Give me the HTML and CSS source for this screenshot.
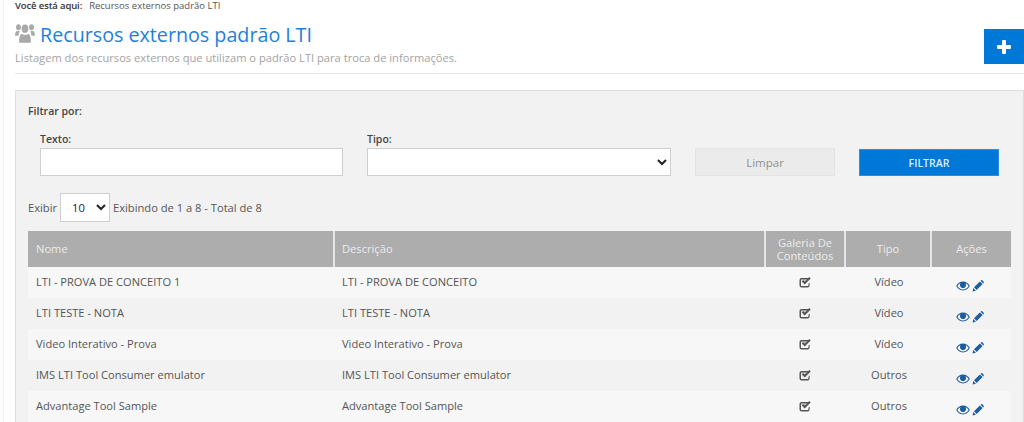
FILE: index.html
```html
<!DOCTYPE html>
<html lang="pt-BR">
<head>
<meta charset="utf-8">
<title>Recursos externos padrão LTI</title>
<link rel="stylesheet" href="styles.css">
</head>
<body>
<svg class="defs" width="0" height="0">
  <symbol id="i-check" viewBox="0 0 12 12">
    <path d="M2.500 2h6.300c.4 0 .8.100 1.100.3L8.700 3.500H2.600a.6.6 0 0 0-.6.600v5.300c0 .3.300.6.600.6h6.200c.3 0 .6-.3.600-.6V7.700l1.200-1.200v2.900a2 2 0 0 1-2 2H2.500a2 2 0 0 1-2-2V4a2 2 0 0 1 2-2z" fill="#555"/>
    <path d="M2.800 5.400l1.400-1.400 1.500 1.500L10.200 1l1.500 1.500-6 6z" fill="#555"/>
    <rect x="2.600" y="3.700" width="6" height="1" fill="#8a8a8a" opacity=".5"/>
  </symbol>
  <symbol id="i-eye" viewBox="0 0 14 10">
    <path d="M7 .6C4 .6 1.600 2.400.2 5c1.400 2.600 3.800 4.400 6.800 4.400s5.400-1.800 6.800-4.400C12.400 2.400 10 .6 7 .6zM7 8.500C4.700 8.500 2.700 7.100 1.400 5 2.200 3.700 3.200 2.700 4.500 2.100a3 3 0 1 0 5 0c1.300.6 2.300 1.600 3.100 2.900-1.300 2.100-3.300 3.500-5.600 3.500z" fill="#1d5c9e"/>
    <circle cx="7" cy="4.200" r="2.700" fill="#1d5c9e"/>
  </symbol>
  <symbol id="i-pencil" viewBox="0 0 12 12">
    <path d="M.6 11.400l.7-3.300 2.600 2.600zM2 7.300L7.900 1.400l2.700 2.700-5.900 5.900zM8.600.7l.5-.4c.4-.3.900-.3 1.200 0l1.400 1.400c.3.300.3.800 0 1.200l-.4.500z" fill="#1d5c9e"/>
  </symbol>
</svg>
<div class="page">
  <aside class="rail"></aside>
  <main class="content">
    <p class="crumbs"><b>Você está aqui:</b><span>Recursos externos padrão LTI</span></p>
    <header class="head">
      <div class="head-text">
        <h1>
          <svg class="users" viewBox="0 0 22 17" width="20" height="19" preserveAspectRatio="none" aria-hidden="true">
            <circle cx="11" cy="4.200" r="3.700" fill="#a9a9a9"/>
            <circle cx="3.800" cy="2.900" r="2.700" fill="#a9a9a9"/>
            <circle cx="18.200" cy="2.900" r="2.700" fill="#a9a9a9"/>
            <path d="M0 11c0-3 1-4.700 2.500-4.700h2.700C4.500 7.500 4 9 4 10.500H0zM22 11c0-3-1-4.700-2.500-4.700h-2.700c.7 1.200 1.200 2.700 1.200 4.200H22z" fill="#a9a9a9"/>
            <path d="M5.500 16.800c-.6 0-1-.5-1-1.200 0-4.300 1.300-6.700 3.300-6.700 1 .7 2 1 3.200 1s2.200-.3 3.200-1c2 0 3.300 2.400 3.300 6.700 0 .7-.4 1.200-1 1.200z" fill="#a9a9a9"/>
          </svg>
          <span>Recursos externos padrão LTI</span>
        </h1>
        <p class="lead">Listagem dos recursos externos que utilizam o padrão LTI para troca de informações.</p>
      </div>
      <button class="add" type="button" aria-label="Adicionar">
        <svg viewBox="0 0 14 14" width="14" height="14"><path d="M5 1a1 1 0 0 1 1-1h2a1 1 0 0 1 1 1v4h4a1 1 0 0 1 1 1v2a1 1 0 0 1-1 1H9v4a1 1 0 0 1-1 1H6a1 1 0 0 1-1-1V9H1a1 1 0 0 1-1-1V6a1 1 0 0 1 1-1h4z" fill="#fff"/></svg>
      </button>
    </header>
    <section class="panel">
      <h2>Filtrar por:</h2>
      <form class="filters">
        <label class="field"><span>Texto:</span><input type="text"></label>
        <label class="field"><span>Tipo:</span><select><option></option></select></label>
        <button class="btn clear" type="button">Limpar</button>
        <button class="btn apply" type="button">FILTRAR</button>
      </form>
      <div class="pager">
        <span>Exibir</span>
        <select><option>10</option></select>
        <span>Exibindo de 1 a 8 - Total de 8</span>
      </div>
      <table>
        <colgroup>
          <col class="c1"><col class="c2"><col class="c3"><col class="c4"><col class="c5">
        </colgroup>
        <thead>
          <tr><th>Nome</th><th>Descrição</th><th class="mid">Galeria De Conteúdos</th><th class="mid">Tipo</th><th class="mid">Ações</th></tr>
        </thead>
        <tbody>
          <tr><td>LTI - PROVA DE CONCEITO 1</td><td>LTI - PROVA DE CONCEITO</td><td class="mid"><svg class="ck"><use href="#i-check"/></svg></td><td class="mid">Vídeo</td><td class="mid acts"><svg class="eye"><use href="#i-eye"/></svg><svg class="pen"><use href="#i-pencil"/></svg></td></tr>
          <tr><td>LTI TESTE - NOTA</td><td>LTI TESTE - NOTA</td><td class="mid"><svg class="ck"><use href="#i-check"/></svg></td><td class="mid">Vídeo</td><td class="mid acts"><svg class="eye"><use href="#i-eye"/></svg><svg class="pen"><use href="#i-pencil"/></svg></td></tr>
          <tr><td>Video Interativo - Prova</td><td>Video Interativo - Prova</td><td class="mid"><svg class="ck"><use href="#i-check"/></svg></td><td class="mid">Vídeo</td><td class="mid acts"><svg class="eye"><use href="#i-eye"/></svg><svg class="pen"><use href="#i-pencil"/></svg></td></tr>
          <tr><td>IMS LTI Tool Consumer emulator</td><td>IMS LTI Tool Consumer emulator</td><td class="mid"><svg class="ck"><use href="#i-check"/></svg></td><td class="mid">Outros</td><td class="mid acts"><svg class="eye"><use href="#i-eye"/></svg><svg class="pen"><use href="#i-pencil"/></svg></td></tr>
          <tr><td>Advantage Tool Sample</td><td>Advantage Tool Sample</td><td class="mid"><svg class="ck"><use href="#i-check"/></svg></td><td class="mid">Outros</td><td class="mid acts"><svg class="eye"><use href="#i-eye"/></svg><svg class="pen"><use href="#i-pencil"/></svg></td></tr>
        </tbody>
      </table>
    </section>
  </main>
</div>
</body>
</html>
```
FILE: styles.css
```css
* { box-sizing: border-box; }
html, body { margin: 0; height: 422px; overflow: hidden; background: #fff; }
body { font-family: "Open Sans", "Liberation Sans", sans-serif; color: #555; font-size: 11px; }
.defs { display: block; height: 0; }
.page { display: flex; height: 422px; overflow: hidden; }
.rail { width: 4px; flex: none; background: #fcfcfc; border-right: 1px solid #efefef; }
.content { flex: 1; min-width: 0; padding-left: 11px; }
.crumbs { margin: 0; height: 12px; line-height: 11px; font-size: 9.500px; color: #555; display: flex; gap: 7px; }
.crumbs b { color: #333; font-weight: 600; letter-spacing: -.12px; }
.head { display: flex; justify-content: space-between; height: 62px; border-bottom: 1px solid #e8e8e8; }
.head-text { min-width: 0; }
h1 { margin: 9px 0 0; display: flex; align-items: center; gap: 5px; height: 28px; font-size: 19.700px; font-weight: 400; color: #1e7fdc; line-height: 28px; }
.users { margin-top: -4px; }
.lead { margin: 1px 0 0; font-size: 11.150px; line-height: 16px; color: #a3a3a3; }
.add { margin-top: 17px; width: 40px; height: 35px; border: 0; padding: 0; background: #0078d7; display: flex; align-items: center; justify-content: center; }
.panel { margin-top: 16px; height: 400px; background: #f2f2f2; border: 1px solid #dedede; padding: 13px 12px 0; }
h2 { margin: 0; font-size: 10.500px; line-height: 14px; font-weight: 600; color: #444; }
.filters { display: flex; align-items: flex-end; margin: 14px 0 0 12px; }
.field { display: flex; flex-direction: column; width: 304px; margin-right: 23px; }
.field:first-child { width: 303px; margin-right: 24px; }
.field span { font-size: 10.500px; line-height: 14px; font-weight: 600; color: #444; margin-bottom: 2px; }
.field input, .field select { width: 100%; height: 28px; border: 1px solid #cfcfcf; background: #fff; border-radius: 0; margin: 0; padding: 0 4px; font: inherit; color: #222; }
.btn { width: 140px; height: 28px; font-family: inherit; border-radius: 0; padding: 0; }
.clear { margin-left: 1px; background: #ebebeb; border: 1px solid #e4e4e4; color: #909090; font-size: 11.500px; }
.apply { margin-left: 24px; height: 27px; background: #0078d7; border: 1px solid #2d8ee0; color: #dcefff; font-size: 10.500px; font-weight: 600; }
.pager { display: flex; align-items: center; gap: 3px; margin-top: 16px; font-size: 11.150px; color: #555; height: 30px; }
.pager select { width: 50px; height: 29px; border: 1px solid #cfcfcf; background: #fff; font: inherit; color: #222; padding-left: 7px; border-radius: 0; margin: 0; }
table { margin-top: 9px; width: 983px; table-layout: fixed; border-collapse: separate; border-spacing: 0; }
.c1 { width: 307px; } .c2 { width: 431px; } .c3 { width: 80px; } .c4 { width: 86px; } .c5 { width: 79px; }
th { height: 36px; padding: 0 8px; background: #adadad; color: #ececec; font-size: 11.150px; line-height: 13.500px; font-weight: 400; text-align: left; border-right: 2px solid #e6e6e6; }
th:last-child { border-right: 0; }
th:nth-child(2), td:nth-child(2) { padding-left: 7px; }
td { height: 31px; padding: 0 8px 2px; font-size: 11.100px; color: #555; background: #f2f2f2; white-space: nowrap; }
tbody tr:nth-child(odd) td { background: #f7f7f7; }
.mid { text-align: center; padding-left: 2px; padding-right: 2px; }
svg { vertical-align: middle; }
.ck { width: 12px; height: 12px; margin-top: -2px; margin-left: -3px; }
.acts { padding-top: 3px; padding-bottom: 0; padding-right: 5px; }
.eye { width: 14px; height: 10px; }
.pen { width: 12px; height: 12px; margin-left: 2px; }
```
